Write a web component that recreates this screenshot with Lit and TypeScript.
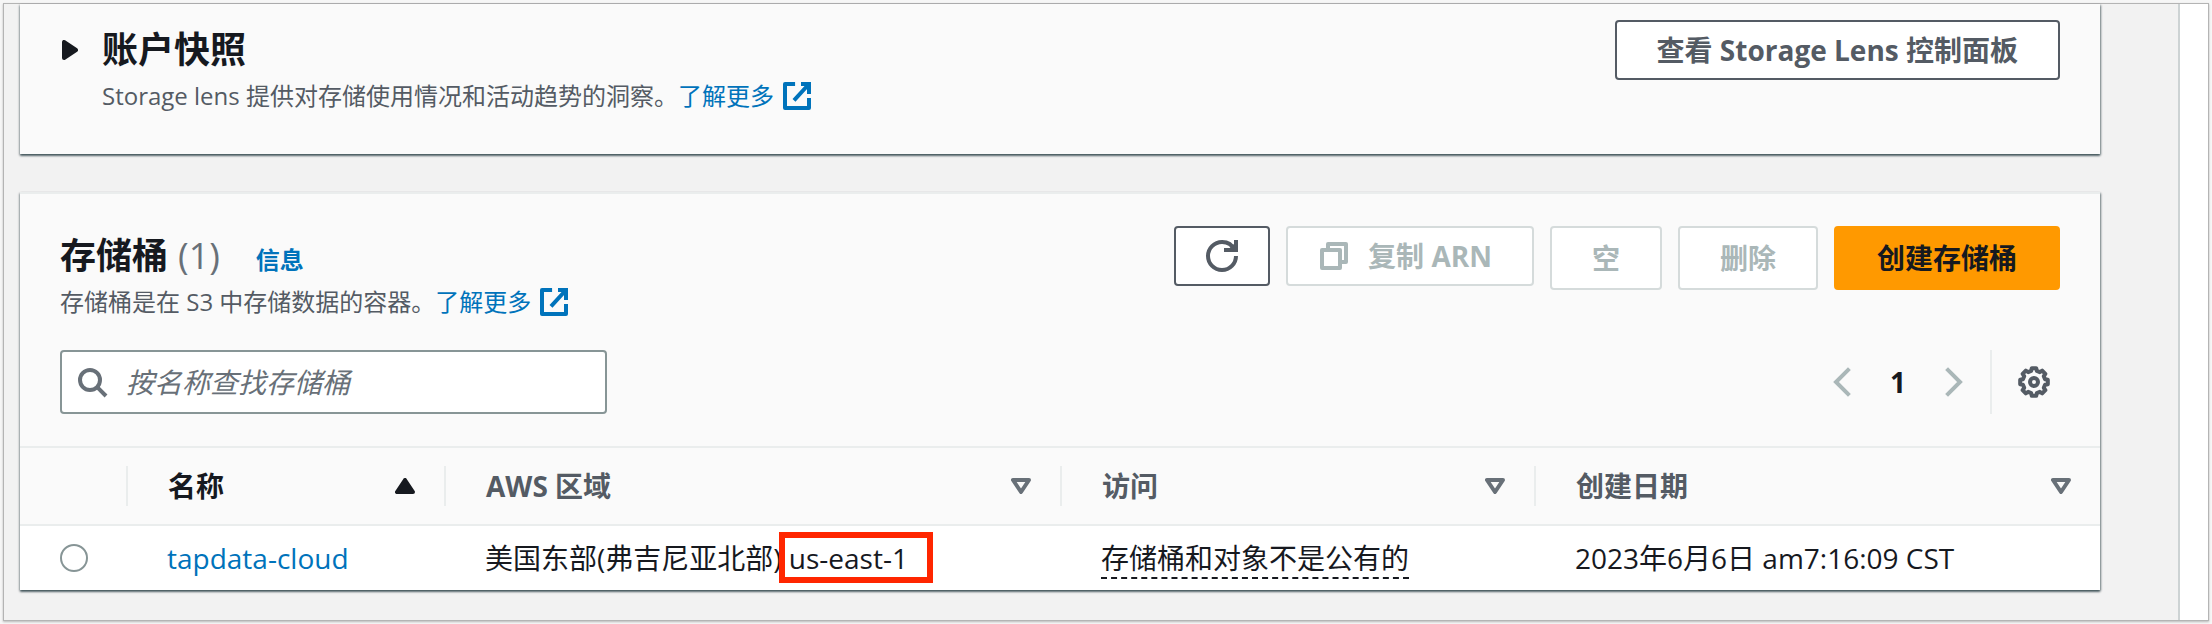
import { LitElement, html, css, svg } from "lit";
import { customElement, state } from "lit/decorators.js";
import { classMap } from "lit/directives/class-map.js";

interface Bucket {
  name: string;
  regionName: string;
  regionCode: string;
  access: string;
  created: string;
}

const BUCKETS: Bucket[] = [
  {
    name: "tapdata-cloud",
    regionName: "美国东部(弗吉尼亚北部)",
    regionCode: "us-east-1",
    access: "存储桶和对象不是公有的",
    created: "2023年6月6日 am7:16:09 CST",
  },
];

const COLUMNS = ["名称", "AWS 区域", "访问", "创建日期"];

// Outline of the settings cog: eight teeth around (8, 8).
function cogPoints(): string {
  const points: string[] = [];
  for (let i = 0; i < 8; i++) {
    const centre = (i * Math.PI) / 4;
    const corners: [number, number][] = [
      [-0.25, 5.7],
      [-0.16, 7],
      [0.16, 7],
      [0.25, 5.7],
    ];
    for (const [offset, radius] of corners) {
      const angle = centre + offset;
      points.push(
        `${(8 + radius * Math.sin(angle)).toFixed(2)},${(8 - radius * Math.cos(angle)).toFixed(2)}`,
      );
    }
  }
  return points.join(" ");
}

const ICONS = {
  external: svg`<path stroke-linejoin="round" d="M14 9.05V14H2V2h5.04"/><path d="M10 2h4v5M6.5 10.2 14 2"/>`,
  refresh: svg`<path d="M9 5h6V0"/><path d="M15 8a7 7 0 1 1-7-7 6.9 6.9 0 0 1 6.3 4"/><path d="M11.4 4.4 14.4 1.6V5z" fill="currentColor" stroke="none"/>`,
  copy: svg`<path stroke-linejoin="round" d="M2 5h9v9H2zM5 5V2h9v9h-3"/>`,
  search: svg`<circle cx="7" cy="7" r="5"/><path d="m10.6 10.6 4.4 4.4"/>`,
  settings: svg`<polygon stroke-linejoin="round" points=${cogPoints()}/><circle cx="8" cy="8" r="2"/>`,
};

const icon = (name: keyof typeof ICONS) =>
  html`<svg class="icon" viewBox="0 0 16 16" aria-hidden="true">${ICONS[name]}</svg>`;

@customElement("app-root")
export class AppRoot extends LitElement {
  @state() private selected = "";

  static styles = css`
    :host {
      display: block;
      box-sizing: border-box;
      min-height: 100vh;
      padding: 3px;
      background: #f6f6f6;
      color: #16191f;
      font-family: "Open Sans", "Noto Sans CJK SC", sans-serif;
      font-size: 28px;
      line-height: 36px;
    }
    *,
    *::before,
    *::after {
      box-sizing: border-box;
    }
    .window {
      display: flex;
      min-height: calc(100vh - 6px);
      border: 1px solid #b4b4b4;
      background: #f2f2f2;
      box-shadow: 0 1px 2px rgba(0, 0, 0, 0.25);
    }
    main {
      flex: 1;
      min-width: 0;
      display: flex;
      flex-direction: column;
      gap: 38px;
      padding: 0 78px 28px 16px;
    }
    .rail {
      flex: none;
      width: 30px;
      border-left: 2px solid #cdd3d4;
      background: #fff;
    }
    .card {
      background: #fafafa;
      box-shadow: 0 2px 2px 0 rgba(0, 28, 36, 0.5), 1px 1px 2px 0 rgba(0, 28, 36, 0.4),
        -1px 1px 2px 0 rgba(0, 28, 36, 0.2);
    }
    .snapshot {
      display: flex;
      align-items: flex-start;
      padding: 16px 40px 40px 42px;
    }
    .buckets {
      border-top: 2px solid #eaeded;
    }
    .toggle {
      flex: none;
      display: flex;
      padding: 20px 24px 0 0;
      border: 0;
      background: none;
      color: inherit;
    }
    .toggle svg {
      width: 16px;
      height: 20px;
    }
    .titles {
      flex: 1;
      display: grid;
      gap: 6px;
      padding-top: 8px;
    }
    .header .titles {
      padding-top: 8px;
    }
    h2 {
      display: flex;
      align-items: baseline;
      gap: 10px;
      height: 44px;
      margin: 0;
      font-size: 36px;
      line-height: 44px;
      font-weight: 700;
    }
    .count {
      color: #687078;
      font-weight: 400;
    }
    .info {
      margin-left: 26px;
      font-size: 24px;
    }
    .description {
      display: flex;
      align-items: center;
      margin: 0;
      color: #545b64;
      font-size: 24px;
    }
    a {
      color: #0073bb;
      text-decoration: none;
    }
    .more {
      display: flex;
      align-items: center;
      gap: 7px;
    }
    .icon {
      display: block;
      flex: none;
      width: 32px;
      height: 32px;
      fill: none;
      stroke: currentColor;
      stroke-width: 2;
    }
    .button {
      display: flex;
      align-items: center;
      justify-content: center;
      height: 64px;
      padding: 0 40px;
      border: 2px solid #545b64;
      border-radius: 4px;
      background: #fff;
      color: #545b64;
      font: inherit;
      font-weight: 700;
      white-space: nowrap;
    }
    .button.short {
      height: 60px;
    }
    .button.square {
      padding: 0 30px;
    }
    .button.with-icon {
      gap: 18px;
      padding: 0 40px 0 30px;
    }
    .button:disabled {
      border-color: #d5dbdb;
      color: #aab7b8;
    }
    .button.primary {
      padding: 0 41px;
      border-color: #ff9900;
      background: #ff9900;
      color: #16191f;
    }
    .header {
      display: flex;
      align-items: flex-start;
      padding: 32px 40px 0 40px;
    }
    .actions {
      display: flex;
      gap: 16px;
    }
    .tools {
      display: flex;
      align-items: center;
      justify-content: space-between;
      padding: 30px 40px 32px 40px;
    }
    .search {
      position: relative;
      flex: 0 1 547px;
      color: #687078;
    }
    .search .icon {
      position: absolute;
      left: 16px;
      top: 16px;
    }
    .search input {
      display: block;
      width: 100%;
      height: 64px;
      padding: 0 16px 0 64px;
      border: 2px solid #879596;
      border-radius: 4px;
      background: #fff;
      color: #16191f;
      font: inherit;
    }
    .search input::placeholder {
      color: #687078;
      font-style: italic;
      opacity: 1;
    }
    .pager {
      display: flex;
      align-items: center;
      height: 64px;
      padding-right: 10px;
    }
    .pager button {
      display: flex;
      padding: 0;
      border: 0;
      background: none;
      color: #545b64;
    }
    .pager button:disabled {
      color: #aab7b8;
    }
    .pages {
      display: flex;
      align-items: center;
      gap: 39px;
      padding-right: 27px;
      font-weight: 700;
    }
    .chevron {
      width: 18px;
      height: 30px;
      fill: none;
      stroke: currentColor;
      stroke-width: 2;
    }
    .preferences {
      display: flex;
      align-items: center;
      height: 64px;
      padding-left: 26px;
      border-left: 2px solid #eaeded;
    }
    table {
      width: 100%;
      border-collapse: separate;
      border-spacing: 0;
      table-layout: fixed;
    }
    .col-select {
      width: 106px;
    }
    .col-name {
      width: 318px;
    }
    .col-region {
      width: 616px;
    }
    .col-access {
      width: 474px;
    }
    th {
      height: 80px;
      padding: 0;
      border-top: 2px solid #eaeded;
      border-bottom: 2px solid #eaeded;
      text-align: left;
    }
    .sort {
      display: flex;
      align-items: center;
      justify-content: space-between;
      width: 100%;
      height: 40px;
      padding: 0 29px 0 40px;
      border: 0;
      border-left: 2px solid #eaeded;
      background: none;
      color: #545b64;
      font: inherit;
      font-weight: 700;
    }
    .sort.active {
      color: #16191f;
    }
    .sort svg {
      width: 20px;
      height: 16px;
      fill: none;
      stroke: #687078;
      stroke-width: 2;
      stroke-linejoin: round;
    }
    .sort.active svg {
      fill: #16191f;
      stroke: #16191f;
    }
    td {
      height: 64px;
      padding: 14px 0 14px 41px;
      background: #fff;
      vertical-align: top;
      white-space: nowrap;
    }
    td.pick {
      padding: 18px 0 18px 40px;
    }
    .pick input {
      display: block;
      appearance: none;
      width: 28px;
      height: 28px;
      margin: 0;
      border: 2px solid #879596;
      border-radius: 50%;
      background: #fff;
    }
    .pick input:checked {
      border: 8px solid #0073bb;
    }
    .code {
      position: relative;
    }
    .code::after {
      content: "";
      position: absolute;
      inset: -7px -25px -6px -10px;
      border: 6px solid #ff2600;
    }
    .access {
      border-bottom: 2px dashed #16191f;
    }
  `;

  private renderSortIcon(active: boolean) {
    return html`<svg viewBox="3 4 10 8" aria-hidden="true">
      <path d=${active ? "M4 11h8L8 5z" : "M4 5h8l-4 6z"} />
    </svg>`;
  }

  private renderRow(bucket: Bucket) {
    return html`<tr>
      <td class="pick">
        <input
          type="radio"
          name="bucket"
          aria-label=${bucket.name}
          .checked=${this.selected === bucket.name}
          @change=${() => (this.selected = bucket.name)}
        />
      </td>
      <td><a href="#bucket">${bucket.name}</a></td>
      <td>${bucket.regionName} <span class="code">${bucket.regionCode}</span></td>
      <td><span class="access">${bucket.access}</span></td>
      <td>${bucket.created}</td>
    </tr>`;
  }

  render() {
    const idle = this.selected === "";
    return html`
      <div class="window">
        <main>
          <section class="card snapshot">
            <button class="toggle" aria-label="账户快照" aria-expanded="false">
              <svg viewBox="4 3 8 10" aria-hidden="true">
                <path
                  d="M5 4v8l6-4z"
                  fill="currentColor"
                  stroke="currentColor"
                  stroke-width="2"
                  stroke-linejoin="round"
                />
              </svg>
            </button>
            <div class="titles">
              <h2>账户快照</h2>
              <p class="description">
                <span>Storage lens 提供对存储使用情况和活动趋势的洞察。</span>
                <a class="more" href="#lens">了解更多${icon("external")}</a>
              </p>
            </div>
            <button class="button short">查看 Storage Lens 控制面板</button>
          </section>

          <section class="card buckets">
            <div class="header">
              <div class="titles">
                <h2>
                  <span>存储桶</span>
                  <span class="count">(${BUCKETS.length})</span>
                  <a class="info" href="#info">信息</a>
                </h2>
                <p class="description">
                  <span>存储桶是在 S3 中存储数据的容器。</span>
                  <a class="more" href="#buckets">了解更多${icon("external")}</a>
                </p>
              </div>
              <div class="actions">
                <button class="button short square" aria-label="刷新">${icon("refresh")}</button>
                <button class="button short with-icon" ?disabled=${idle}>
                  ${icon("copy")}复制 ARN
                </button>
                <button class="button" ?disabled=${idle}>空</button>
                <button class="button" ?disabled=${idle}>删除</button>
                <button class="button primary">创建存储桶</button>
              </div>
            </div>
            <div class="tools">
              <label class="search">
                ${icon("search")}
                <input type="text" aria-label="按名称查找存储桶" placeholder="按名称查找存储桶" />
              </label>
              <div class="pager">
                <div class="pages">
                  <button disabled aria-label="上一页">
                    <svg class="chevron" viewBox="0 0 9 15"><path d="M8.2.8 1.5 7.5l6.7 6.7" /></svg>
                  </button>
                  <span>1</span>
                  <button disabled aria-label="下一页">
                    <svg class="chevron" viewBox="0 0 9 15"><path d="m.8.8 6.7 6.7-6.7 6.7" /></svg>
                  </button>
                </div>
                <div class="preferences">
                  <button aria-label="首选项">${icon("settings")}</button>
                </div>
              </div>
            </div>
            <table>
              <colgroup>
                <col class="col-select" />
                <col class="col-name" />
                <col class="col-region" />
                <col class="col-access" />
                <col />
              </colgroup>
              <thead>
                <tr>
                  <th></th>
                  ${COLUMNS.map(
                    (label, index) => html`<th scope="col">
                      <button class=${classMap({ sort: true, active: index === 0 })}>
                        ${label}${this.renderSortIcon(index === 0)}
                      </button>
                    </th>`,
                  )}
                </tr>
              </thead>
              <tbody>
                ${BUCKETS.map((bucket) => this.renderRow(bucket))}
              </tbody>
            </table>
          </section>
        </main>
        <aside class="rail"></aside>
      </div>
    `;
  }
}
